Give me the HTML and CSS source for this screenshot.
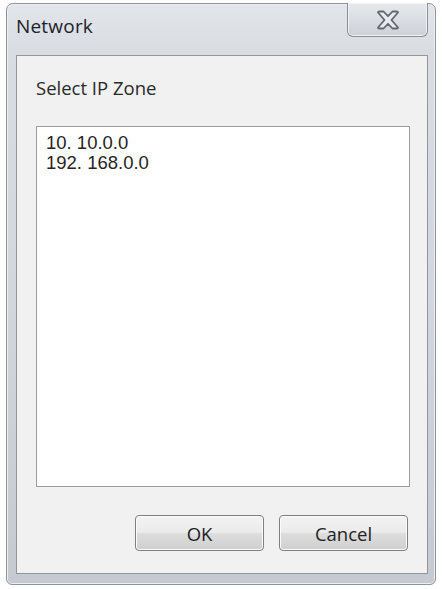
FILE: index.html
```html
<!DOCTYPE html>
<html>
<head>
<meta charset="utf-8">
<link rel="stylesheet" href="styles.css">
</head>
<body>
<div class="window">
  <div class="titlebar">
    <span class="title">Network</span>
    <div class="close">
      <svg width="26" height="20" viewBox="0 0 26 20">
        <path d="M3 2.5 Q3 1.5 4.5 1.5 L8.5 1.5 L13 6.2 L17.5 1.5 L21.5 1.5 Q23 1.5 23 2.5 L16.5 10 L23 17.5 Q23 18.5 21.5 18.5 L17.5 18.5 L13 13.8 L8.5 18.5 L4.5 18.5 Q3 18.5 3 17.5 L9.5 10 Z" fill="#e8eaee" stroke="#626770" stroke-width="1.8" stroke-linejoin="round"/>
      </svg>
    </div>
  </div>
  <div class="client">
    <div class="label">Select IP Zone</div>
    <div class="list">
      <div class="item">10. 10.0.0</div>
      <div class="item">192. 168.0.0</div>
    </div>
    <div class="buttons">
      <button class="btn">OK</button>
      <button class="btn">Cancel</button>
    </div>
  </div>
</div>
</body>
</html>
```

FILE: styles.css
```css
html, body {
  margin: 0;
  padding: 0;
  background: #ffffff;
}
body {
  width: 442px;
  height: 589px;
  overflow: hidden;
  font-family: "Open Sans", "DejaVu Sans", sans-serif;
}
.window {
  margin: 3px 6px 0 6px;
  width: 430px;
  height: 582px;
  box-sizing: border-box;
  border: 1px solid #8f949b;
  border-radius: 7px 7px 6px 6px;
  background: linear-gradient(180deg, #e2e5e9 0%, #d9dde2 8%, #d2d7dd 50%, #c5cad1 100%);
  display: flex;
  flex-direction: column;
  box-shadow: inset 0 0 0 1px #eceef1;
}
.titlebar {
  height: 49px;
  display: flex;
  align-items: flex-start;
  justify-content: space-between;
}
.title {
  margin: 9px 0 0 9px;
  font-size: 19px;
  line-height: 26px;
  color: #1b222c;
  letter-spacing: 0.2px;
}
.close {
  width: 81px;
  height: 34px;
  margin: -1px 7px 0 0;
  box-sizing: border-box;
  border: 1px solid #8a8f97;
  border-top: none;
  border-radius: 0 0 6px 6px;
  background: linear-gradient(180deg, #e6e9ec 0%, #dadee3 50%, #ccd1d8 100%);
  box-shadow: inset 0 0 0 1px #f0f2f4;
  display: flex;
  align-items: center;
  justify-content: center;
}
.client {
  margin: 2px 7px 10px 9px;
  flex: 1;
  background: #f1f1f1;
  border: 1px solid #92969c;
  display: flex;
  flex-direction: column;
  padding: 0 17px 0 19px;
}
.label {
  margin-top: 20px;
  font-size: 18.5px;
  line-height: 24px;
  height: 24px;
  color: #2a2a2a;
}
.list {
  margin-top: 26px;
  height: 361px;
  box-sizing: border-box;
  background: #ffffff;
  border: 1px solid #9c9c9c;
  padding: 6px 9px;
}
.item {
  font-family: "Liberation Sans", "DejaVu Sans", sans-serif;
  font-size: 18.5px;
  line-height: 20px;
  color: #252525;
}
.buttons {
  display: flex;
  justify-content: flex-end;
  gap: 15px;
  margin-top: 28px;
  padding-right: 2px;
}
.btn {
  width: 129px;
  height: 36px;
  box-sizing: border-box;
  border: 1px solid #7f7f7f;
  border-radius: 4px;
  background: linear-gradient(180deg, #f3f3f3 0%, #ebebeb 48%, #dddddd 52%, #cfcfcf 100%);
  box-shadow: inset 0 0 0 1px #fbfbfb;
  font-family: "Open Sans", "DejaVu Sans", sans-serif;
  font-size: 18.5px;
  color: #222;
  padding: 0;
}
```
